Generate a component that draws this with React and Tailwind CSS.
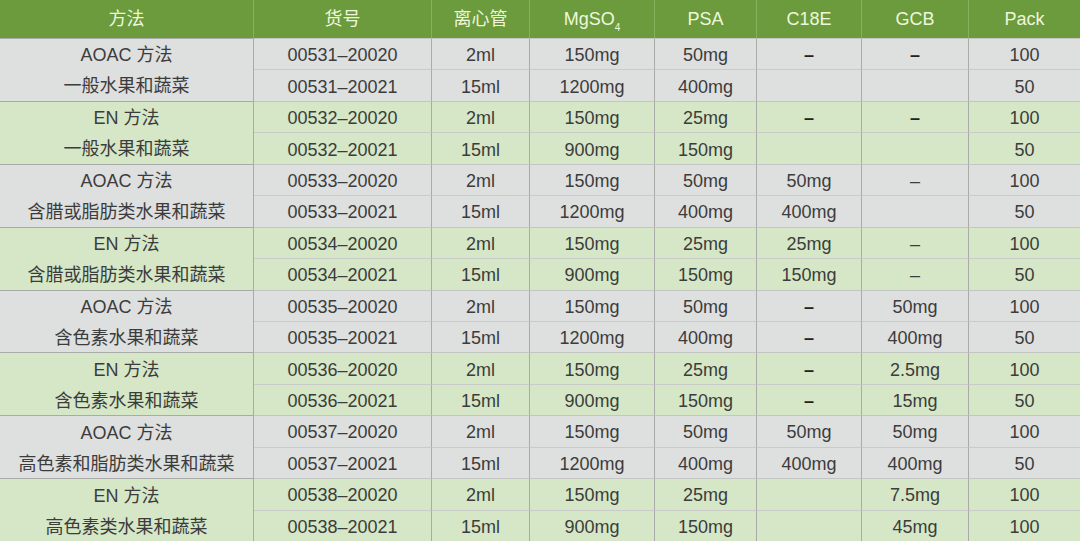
const groups = [
  {
    method: 'AOAC 方法',
    matrix: '一般水果和蔬菜',
    bg: 'bg-[#dedfdf]',
    rows: [
      ['00531–20020', '2ml', '150mg', '50mg', 'B', 'B', '100'],
      ['00531–20021', '15ml', '1200mg', '400mg', '', '', '50'],
    ],
  },
  {
    method: 'EN 方法',
    matrix: '一般水果和蔬菜',
    bg: 'bg-[#d5e7c6]',
    rows: [
      ['00532–20020', '2ml', '150mg', '25mg', 'B', 'B', '100'],
      ['00532–20021', '15ml', '900mg', '150mg', '', '', '50'],
    ],
  },
  {
    method: 'AOAC 方法',
    matrix: '含腊或脂肪类水果和蔬菜',
    bg: 'bg-[#dedfdf]',
    rows: [
      ['00533–20020', '2ml', '150mg', '50mg', '50mg', '–', '100'],
      ['00533–20021', '15ml', '1200mg', '400mg', '400mg', '', '50'],
    ],
  },
  {
    method: 'EN 方法',
    matrix: '含腊或脂肪类水果和蔬菜',
    bg: 'bg-[#d5e7c6]',
    rows: [
      ['00534–20020', '2ml', '150mg', '25mg', '25mg', '–', '100'],
      ['00534–20021', '15ml', '900mg', '150mg', '150mg', '–', '50'],
    ],
  },
  {
    method: 'AOAC 方法',
    matrix: '含色素水果和蔬菜',
    bg: 'bg-[#dedfdf]',
    rows: [
      ['00535–20020', '2ml', '150mg', '50mg', 'B', '50mg', '100'],
      ['00535–20021', '15ml', '1200mg', '400mg', 'B', '400mg', '50'],
    ],
  },
  {
    method: 'EN 方法',
    matrix: '含色素水果和蔬菜',
    bg: 'bg-[#d5e7c6]',
    rows: [
      ['00536–20020', '2ml', '150mg', '25mg', 'B', '2.5mg', '100'],
      ['00536–20021', '15ml', '900mg', '150mg', 'B', '15mg', '50'],
    ],
  },
  {
    method: 'AOAC 方法',
    matrix: '高色素和脂肪类水果和蔬菜',
    bg: 'bg-[#dedfdf]',
    rows: [
      ['00537–20020', '2ml', '150mg', '50mg', '50mg', '50mg', '100'],
      ['00537–20021', '15ml', '1200mg', '400mg', '400mg', '400mg', '50'],
    ],
  },
  {
    method: 'EN 方法',
    matrix: '高色素类水果和蔬菜',
    bg: 'bg-[#d5e7c6]',
    rows: [
      ['00538–20020', '2ml', '150mg', '25mg', '', '7.5mg', '100'],
      ['00538–20021', '15ml', '900mg', '150mg', '', '45mg', '100'],
    ],
  },
];

const headers = ['方法', '货号', '离心管', 'MgSO4', 'PSA', 'C18E', 'GCB', 'Pack'];

function Value({ v }) {
  // "B" marks the heavier dash used in some cells
  if (v === 'B') return <span className="font-bold text-[#222]">–</span>;
  return v;
}

export default function App() {
  return (
    <div
      className="w-[1080px] h-[541px] overflow-hidden grid grid-cols-[254px_178px_98px_125px_102px_105px_107px_111px] grid-rows-[38px_repeat(16,minmax(0,1fr))] text-[18px] text-[#3c3c3c] text-center"
      style={{ fontFamily: '"Liberation Sans", "Noto Sans CJK SC", sans-serif' }}
    >
      {headers.map((h, i) => (
        <div
          key={h}
          className={`flex items-center justify-center pt-[1px] bg-[#6b9b3c] text-[#eef7dc] ${i < 7 ? 'border-r border-[#86b05c]' : ''}`}
        >
          {h === 'MgSO4' ? (
            <span>
              MgSO<sub className="text-[10px] align-[-3px]">4</sub>
            </span>
          ) : (
            h
          )}
        </div>
      ))}

      {groups.map((g, gi) =>
        g.rows.map((r, ri) => [
          ri === 0 && (
            <div
              key={gi + '-m'}
              className={`row-span-2 flex flex-col border-r border-t border-[#a9aba9] ${g.bg}`}
            >
              <div className="flex-1 flex items-center justify-center pt-[3px]">{g.method}</div>
              <div className="flex-1 flex items-center justify-center pt-[3px]">{g.matrix}</div>
            </div>
          ),
          ...r.map((v, ci) => (
            <div
              key={gi + '-' + ri + '-' + ci}
              className={`flex items-center justify-center pt-[3px] border-t ${ri === 0 ? 'border-t-[#c4c6c4]' : 'border-t-[#c9cbc9]'} ${g.bg} ${ci < 6 ? 'border-r border-r-[#a9aba9]' : ''}`}
            >
              <Value v={v} />
            </div>
          )),
        ])
      )}
    </div>
  );
}
